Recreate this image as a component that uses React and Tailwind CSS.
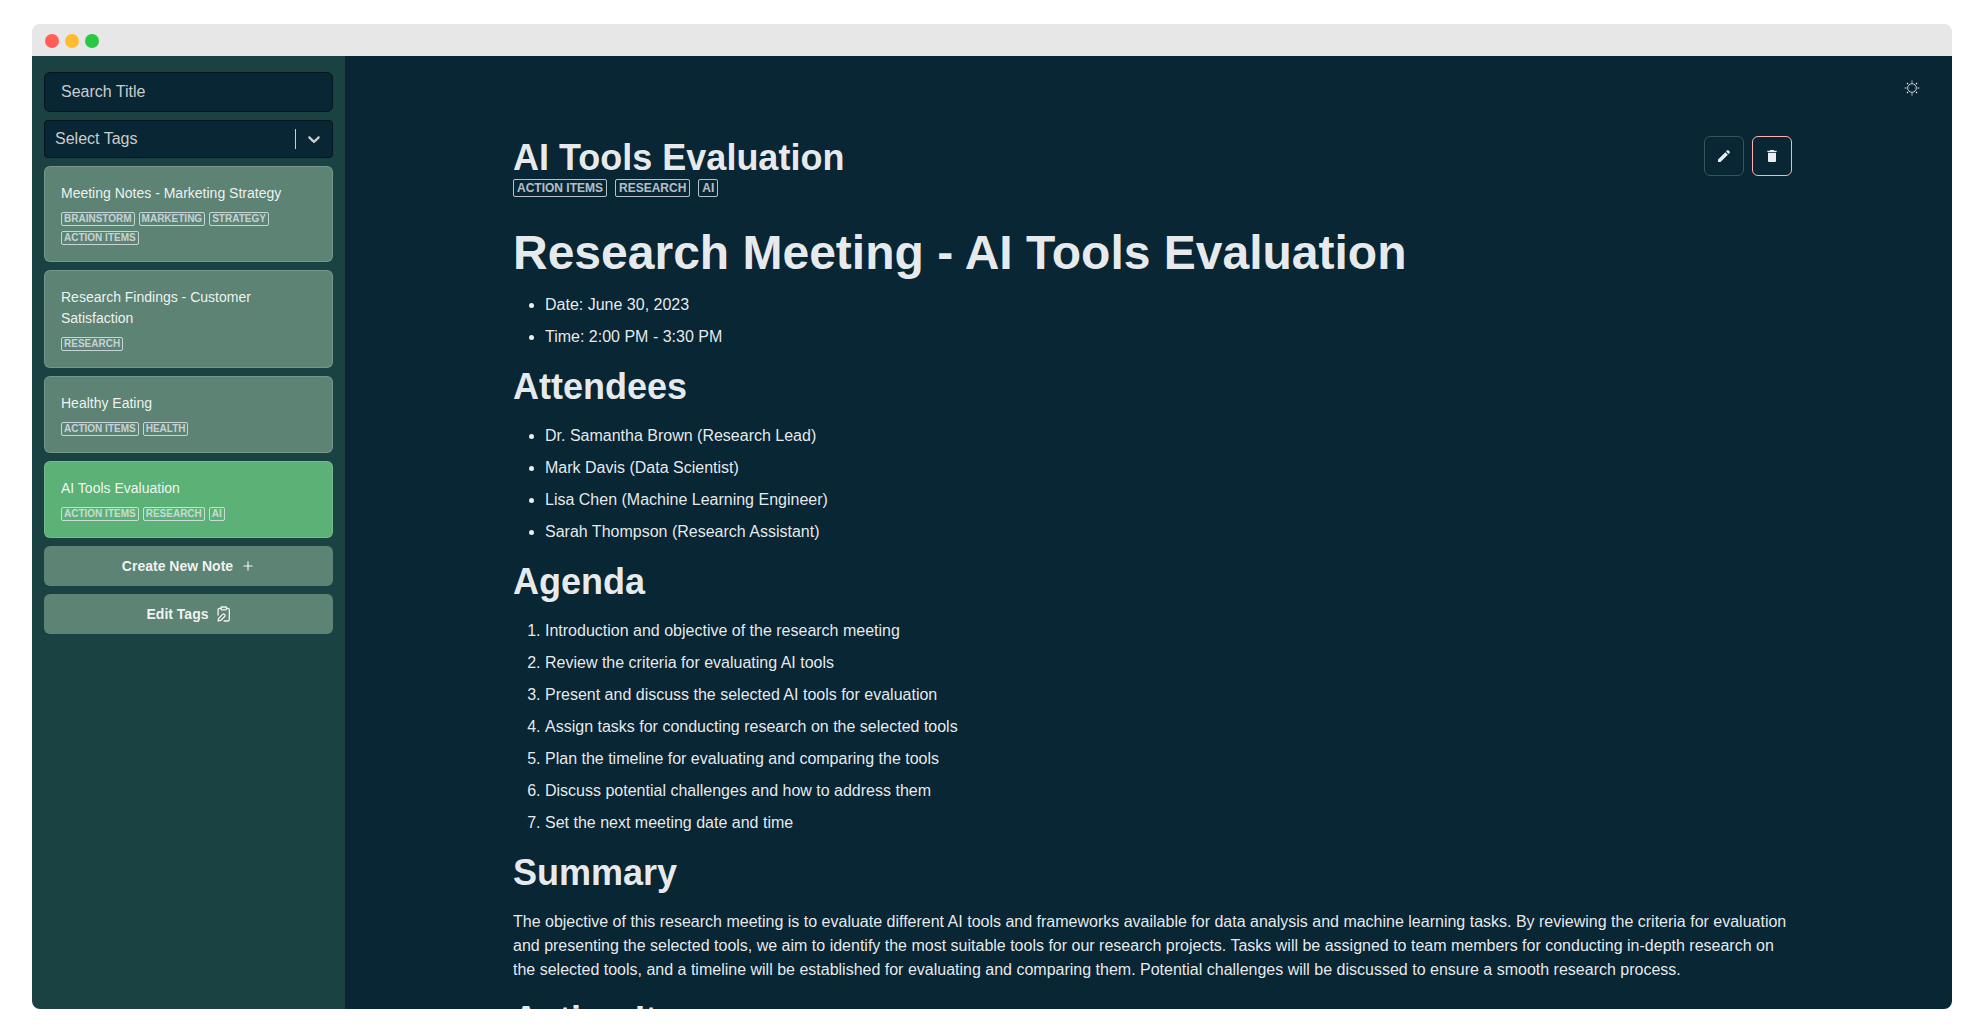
import { MdEdit, MdDelete } from "react-icons/md";
import { LuPlus } from "react-icons/lu";

const notes = [
  { title: "Meeting Notes - Marketing Strategy", tags: ["Brainstorm", "Marketing", "Strategy", "Action Items"] },
  { title: "Research Findings - Customer Satisfaction", tags: ["Research"] },
  { title: "Healthy Eating", tags: ["Action Items", "Health"] },
  { title: "AI Tools Evaluation", tags: ["Action Items", "Research", "AI"], active: true },
];

const meta = ["Date: June 30, 2023", "Time: 2:00 PM - 3:30 PM"];

const attendees = [
  "Dr. Samantha Brown (Research Lead)",
  "Mark Davis (Data Scientist)",
  "Lisa Chen (Machine Learning Engineer)",
  "Sarah Thompson (Research Assistant)",
];

const agenda = [
  "Introduction and objective of the research meeting",
  "Review the criteria for evaluating AI tools",
  "Present and discuss the selected AI tools for evaluation",
  "Assign tasks for conducting research on the selected tools",
  "Plan the timeline for evaluating and comparing the tools",
  "Discuss potential challenges and how to address them",
  "Set the next meeting date and time",
];

function SunIcon() {
  return (
    <svg viewBox="0 0 16 16" className="size-4" fill="none" stroke="currentColor" aria-hidden="true">
      <circle cx="8" cy="8" r="4.3" strokeWidth="0.9" />
      <path strokeWidth="0.9" d="M8 .6v2M8 13.4v2M.6 8h2M13.4 8h2" />
      <path strokeWidth="1.1" d="M3 3l1 1M12 12l1 1M3 13l1-1M12 4l1-1" />
    </svg>
  );
}

function ClipboardEditIcon() {
  return (
    <svg viewBox="1 2 20 20" className="size-[14px] overflow-visible" fill="none" stroke="currentColor" strokeWidth="1.8" strokeLinecap="round" strokeLinejoin="round" aria-hidden="true">
      <rect x="8" y="2" width="8" height="4" rx="1" />
      <path d="M10.42 12.61a2.1 2.1 0 1 1 2.97 2.97L7.95 21 4 22l.99-3.95 5.43-5.44Z" />
      <path d="M16 4h2a2 2 0 0 1 2 2v14a2 2 0 0 1-2 2h-5.5" />
      <path d="M4 13.5V6a2 2 0 0 1 2-2h2" />
    </svg>
  );
}

function NoteCard({ note }) {
  return (
    <button
      type="button"
      className={`w-full rounded-md border border-white/16 p-4 text-left ${note.active ? "bg-[#5cb176]" : "bg-[#5c8374]"}`}
    >
      <span className="block text-sm leading-[21px]">{note.title}</span>
      <span className="mt-2 flex flex-wrap gap-x-1 gap-y-[5px]">
        {note.tags.map((t) => (
          <span key={t} className="rounded-xs border border-[#e2e8f0]/80 px-0.5 text-[10px] leading-[12px] font-bold text-[#e2e8f0]/80 uppercase">
            {t}
          </span>
        ))}
      </span>
    </button>
  );
}

function Heading({ children }) {
  return <h2 className="my-4 text-4xl leading-[43px] font-bold">{children}</h2>;
}

function Items({ items, ordered }) {
  const List = ordered ? "ol" : "ul";
  return (
    <List className={`pl-8 ${ordered ? "list-decimal" : "list-disc"}`}>
      {items.map((i) => (
        <li key={i} className="my-2 leading-6">{i}</li>
      ))}
    </List>
  );
}

export default function App() {
  return (
    <div className="h-screen bg-white px-8 py-6 font-['Liberation_Sans',Arial,sans-serif] text-base text-white/92">
      <div className="flex h-full flex-col overflow-hidden rounded-lg">
        <div className="flex h-8 shrink-0 items-center gap-1.5 bg-[#e7e7e7] px-[13px] pt-0.5">
          <span className="size-[14px] rounded-full bg-[#ff5f57]" />
          <span className="size-[14px] rounded-full bg-[#febc2e]" />
          <span className="size-[14px] rounded-full bg-[#28c840]" />
        </div>
        <div className="flex min-h-0 flex-1">
          <aside className="flex w-[313px] shrink-0 flex-col gap-2 bg-[#1b4242] px-3 pt-4">
            <input
              type="text"
              aria-label="Search Title"
              placeholder="Search Title"
              className="h-10 w-full rounded-md border border-[#04151d] bg-[#092635] px-4 placeholder:text-[#cccccc]"
            />
            <button
              type="button"
              aria-haspopup="listbox"
              className="flex h-[38px] w-full items-center rounded-sm border border-[#04151d] bg-[#092635] pl-[10px] text-left text-[#cccccc]"
            >
              <span className="flex-1">Select Tags</span>
              <span className="h-5 w-px bg-[#cccccc]" />
              <svg viewBox="0 0 20 20" className="mx-2 size-5" fill="currentColor" aria-hidden="true">
                <path d="M4.516 7.548c0.436-0.446 1.043-0.481 1.576 0l3.908 3.747 3.908-3.747c0.533-0.481 1.141-0.446 1.574 0 0.436 0.445 0.408 1.197 0 1.615-0.406 0.418-4.695 4.502-4.695 4.502-0.217 0.223-0.502 0.335-0.787 0.335s-0.57-0.112-0.789-0.335c0 0-4.287-4.084-4.695-4.502s-0.436-1.17 0-1.615z" />
              </svg>
            </button>
            {notes.map((n) => (
              <NoteCard key={n.title} note={n} />
            ))}
            <button type="button" className="flex h-10 w-full items-center justify-center gap-2 rounded-md bg-[#5c8374] text-sm font-bold">
              Create New Note <LuPlus className="size-[14px]" />
            </button>
            <button type="button" className="flex h-10 w-full items-center justify-center gap-2 rounded-md bg-[#5c8374] text-sm font-bold">
              Edit Tags <ClipboardEditIcon />
            </button>
          </aside>
          <main className="flex min-w-0 flex-1 flex-col overflow-hidden bg-[#092635] pl-2">
            <div className="flex h-16 shrink-0 items-center justify-end pr-8">
              <button type="button" aria-label="Toggle theme">
                <SunIcon />
              </button>
            </div>
            <div className="mx-auto mt-4 w-full max-w-[1279px]">
              <header className="flex items-start justify-between">
                <div>
                  <h1 className="text-4xl leading-[43px] font-bold">AI Tools Evaluation</h1>
                  <div className="flex gap-2">
                    {["Action Items", "Research", "AI"].map((t) => (
                      <span key={t} className="rounded-xs border border-[#e2e8f0]/80 px-[3px] text-xs leading-4 font-bold text-[#e2e8f0]/80 uppercase">
                        {t}
                      </span>
                    ))}
                  </div>
                </div>
                <div className="flex gap-2">
                  <button type="button" aria-label="Edit note" className="flex size-10 items-center justify-center rounded-md border border-[#37545a]">
                    <MdEdit className="size-4" />
                  </button>
                  <button type="button" aria-label="Delete note" className="flex size-10 items-center justify-center rounded-md border border-[#feb2b2]">
                    <MdDelete className="size-4" />
                  </button>
                </div>
              </header>
              <article className="mt-[27px]">
                <h1 className="mb-[11px] text-5xl leading-[58px] font-bold">Research Meeting - AI Tools Evaluation</h1>
                <Items items={meta} />
                <Heading>Attendees</Heading>
                <Items items={attendees} />
                <Heading>Agenda</Heading>
                <Items items={agenda} ordered />
                <Heading>Summary</Heading>
                <p className="mb-4 leading-6">
                  The objective of this research meeting is to evaluate different AI tools and frameworks available for data analysis and machine learning tasks. By reviewing the criteria for evaluation and presenting the selected tools, we aim to identify the most suitable tools for our research projects. Tasks will be assigned to team members for conducting in-depth research on the selected tools, and a timeline will be established for evaluating and comparing them. Potential challenges will be discussed to ensure a smooth research process.
                </p>
                <Heading>Action Items</Heading>
              </article>
            </div>
          </main>
        </div>
      </div>
    </div>
  );
}
